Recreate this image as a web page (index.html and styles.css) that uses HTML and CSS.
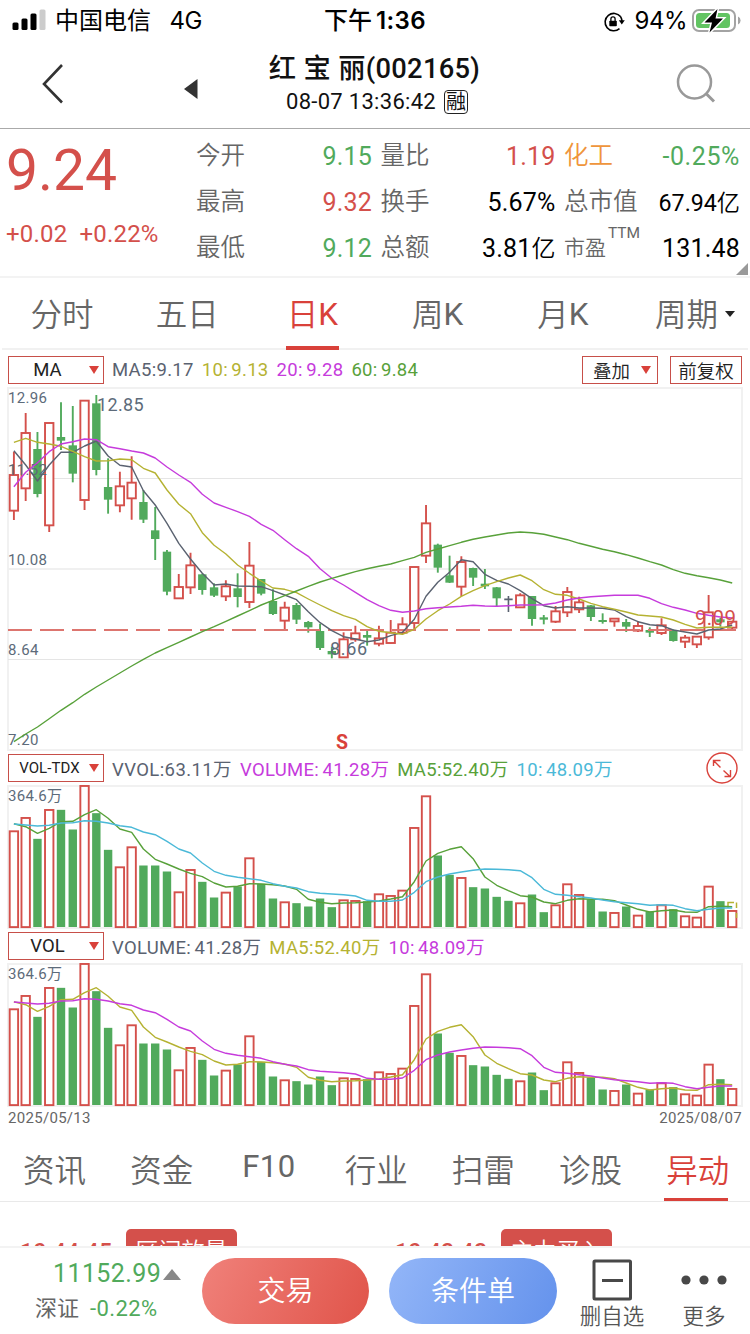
FILE: index.html
```html
<!DOCTYPE html>
<html lang="zh-CN">
<head>
<meta charset="utf-8">
<title>红宝丽 002165</title>
<link rel="stylesheet" href="styles.css">
</head>
<body>
<div class="screen">
  <div class="status">
    <svg class="signal" width="34" height="22" viewBox="0 0 34 22">
      <rect x="0.5" y="13.500" width="6" height="7.500" rx="1.500"/><rect x="9.500" y="9.500" width="6" height="11.500" rx="1.500"/>
      <rect x="18.500" y="4.500" width="6" height="16.500" rx="1.500"/><rect x="27.500" y="0.500" width="6" height="20.500" rx="1.500" fill="#ccc"/>
    </svg>
    <span class="carrier">中国电信</span><span class="net">4G</span>
    <span class="clock">下午<b>1:36</b></span>
    <svg class="lock" width="22" height="22" viewBox="0 0 22 22">
      <path d="M17.700 5.800A8.700 8.700 0 1 0 16.500 17.700M17.700 5.800Q19 8 19 10.500" fill="none" stroke="#000" stroke-width="1.600"/>
      <path d="M15.800 9.200h6l-3 4.300z"/><rect x="6.300" y="9.700" width="7.500" height="5.500" rx=".8"/>
      <path d="M7.900 10V8a2.100 2.100 0 0 1 4.200 0v2" fill="none" stroke="#000" stroke-width="1.300"/>
    </svg>
    <span class="percent">94%</span>
    <svg class="battery" width="49" height="26" viewBox="0 0 49 26">
      <rect x="1" y="2" width="42" height="21" rx="6" fill="none" stroke="#a3a3a3" stroke-width="2"/>
      <path d="M46 8.500q2.600 1 2.600 4t-2.600 4z" fill="#a3a3a3"/>
      <rect x="4" y="5" width="34" height="15" rx="3.500" fill="#62c462"/>
      <path d="M25.500 1 12.500 14.600H20L17.500 24.500 31 10.500H23.500z" stroke="#fff" stroke-width="3"/><path d="M25.500 1 12.500 14.600H20L17.500 24.500 31 10.500H23.500z"/>
    </svg>
  </div>

  <header class="header">
    <svg class="back" width="24" height="42" viewBox="0 0 24 42"><path d="M21 2 3 21 21 39.500" fill="none" stroke="#333" stroke-width="2.600"/></svg>
    <svg class="prev" width="14" height="20" viewBox="0 0 14 20"><path d="M0 10 13.500 0V20z" fill="#333"/></svg>
    <div class="title">
      <h1>红 宝 丽(002165)</h1>
      <p>08-07 13:36:42<span class="margin-tag">融</span></p>
    </div>
    <svg class="search" width="40" height="40" viewBox="0 0 40 40" fill="none" stroke="#999" stroke-width="2.500"><circle cx="18.500" cy="18" r="16.500"/><path d="M30 29.500 38 37.500" stroke-width="3"/></svg>
  </header>

  <section class="quote">
    <div class="price">
      <div class="last red">9.24</div>
      <div class="change red"><span>+0.02</span><span>+0.22%</span></div>
    </div>
    <dl class="stats">
      <div><dt>今开</dt><dd class="green">9.15</dd></div>
      <div><dt>量比</dt><dd class="red">1.19</dd></div>
      <div><dt class="orange">化工</dt><dd class="green wide">-0.25%</dd></div>
      <div><dt>最高</dt><dd class="red">9.32</dd></div>
      <div><dt>换手</dt><dd>5.67%</dd></div>
      <div><dt>总市值</dt><dd class="tight">67.94<i>亿</i></dd></div>
      <div><dt>最低</dt><dd class="green">9.12</dd></div>
      <div><dt>总额</dt><dd>3.81<i>亿</i></dd></div>
      <div><dt class="pe">市盈<sup>TTM</sup></dt><dd>131.48</dd></div>
    </dl>
    <span class="corner"></span>
  </section>

  <nav class="periods">
    <a>分时</a><a>五日</a><a class="on">日<b>K</b></a><a>周<b>K</b></a><a>月<b>K</b></a><a class="more">周期<i class="caret"></i></a>
  </nav>

  <section class="panel-main">
    <div class="legend">
      <button class="pick">MA<i class="tri"></i></button>
      <span class="slate">MA5:9.17</span><span class="olive">10: 9.13</span><span class="purple">20: 9.28</span><span class="leaf">60: 9.84</span>
      <button class="overlay">叠加<i class="tri"></i></button><button class="adjust">前复权</button>
    </div>
    <svg id="kline" class="chart" width="750" height="367" viewBox="0 385 750 367"></svg>
  </section>

  <section class="panel-vol">
    <div class="legend">
      <button class="pick small">VOL-TDX<i class="tri"></i></button>
      <span class="slate wide">VVOL:63.11万</span><span class="purple">VOLUME: 41.28万</span><span class="leaf">MA5:52.40万</span><span class="sky">10: 48.09万</span>
      <svg class="expand" width="32" height="32" viewBox="0 0 32 32" fill="none" stroke="#d9413a" stroke-width="1.400"><circle cx="16" cy="16" r="15"/><path d="M7.500 14V8.500H14.500M8 9 14.500 15.500M17.500 18.500 24.500 25M18.500 24.500H24.500V18"/></svg>
    </div>
    <svg id="vol1" class="chart" width="750" height="146" viewBox="0 784 750 146"></svg>
  </section>

  <section class="panel-vol">
    <div class="legend">
      <button class="pick">VOL<i class="tri"></i></button>
      <span class="slate">VOLUME: 41.28万</span><span class="olive">MA5:52.40万</span><span class="purple">10: 48.09万</span>
    </div>
    <svg id="vol2" class="chart" width="750" height="146" viewBox="0 784 750 146"></svg>
  </section>
  <div class="dates"><span>2025/05/13</span><span>2025/08/07</span></div>

  <nav class="topics">
    <a>资讯</a><a>资金</a><a class="latin">F10</a><a>行业</a><a>扫雷</a><a>诊股</a><a class="on">异动</a>
  </nav>

  <section class="moves">
    <div><time>10:44:45</time><span class="tag">区间放量</span><em>6.82%</em></div>
    <div><time>10:42:42</time><span class="tag">主力买入</span></div>
  </section>

  <footer class="bar">
    <div class="index"><div class="level green">11152.99<i></i></div><div class="delta"><span>深证</span><span class="green">-0.22%</span></div></div>
    <button class="trade">交易</button>
    <button class="cond">条件单</button>
    <div class="action del"><svg width="40" height="42" viewBox="0 0 40 42" fill="none" stroke="#484848" stroke-width="3"><rect x="2" y="2" width="36.500" height="38" rx="1"/><path d="M10 21.500H31"/></svg><span>删自选</span></div>
    <div class="action etc"><svg width="46" height="42" viewBox="0 0 46 42" fill="#484848"><circle cx="5" cy="21" r="4.600"/><circle cx="23" cy="21" r="4.600"/><circle cx="41" cy="21" r="4.600"/></svg><span>更多</span></div>
  </footer>
</div>
<script src="charts.js"></script>
</body>
</html>
```

FILE: charts.js
```js
const RED = '#d4504b', GREEN = '#51aa5c', SLATE = '#5a6270', OLIVE = '#b5b232', PURPLE = '#c63bdc', LEAF = '#58a13a', SKY = '#4bb9d8';
const x = i => 13.9 + i * 11.775;

// Each candle: [kind, high, body top, body bottom, low], in thirds of a pixel below y = 385
const candles = `r 200 270 377 405|r 84 144 310 348|g 141 192 327 337|r 114 114 421 441|g 52 156 167 195|g 63 181 266 292|r 47 47 345 375|g 30 55 255 271|g 220 306 344 386|r 260 304 361 382|r 214 293 340 404|g 315 351 404 414|g 366 436 462 525|g 495 500 620 631|r 567 606 640 640|r 503 541 607 627|g 566 568 615 629|g 595 607 632 636|r 586 604 634 648|g 565 610 636 667|r 471 542 651 669|g 582 582 626 631|g 613 648 687 690|r 650 668 707 732|g 654 660 704 717|g 708 711 727 743|g 716 738 789 795|g 785 798 808 820|r 742 763 817 817|r 722 745 763 770|g 732 750 758 782|r 722 760 776 784|r 705 743 774 776|r 697 718 743 748|r 546 546 714 736|r 360 415 512 534|g 476 479 548 563|g 512 571 593 594|r 514 531 605 634|g 548 549 578 603|g 552 596 604 612|g 606 607 640 664|d 633 643 643 681|r 625 631 667 669|g 633 633 702 722|g 690 697 704 718|r 663 679 710 714|r 606 621 682 696|r 635 652 673 684|g 660 661 696 708|g 685 705 711 716|r 700 701 709 725|g 702 711 725 741|r 708 723 737 741|g 727 735 743 756|r 700 721 744 750|g 733 736 768 770|r 750 758 770 789|r 753 755 778 789|r 630 682 757 764|g 699 703 712 725|r 708 710 728 732`
  .split('|').map(s => { const p = s.split(' '); return [p[0], ...p.slice(1).map(v => 385 + v / 3)]; });

const ma5 = [197,240,288,240,202,202,183,168,213,241,246,317,360,415,475,522,565,600,597,603,604,605,617,630,644,680,713,737,755,762,770,765,752,742,703,634,592,562,524,530,568,586,597,617,641,662,669,665,669,669,670,675,695,710,719,722,735,741,747,735,732,720];
const ma10 = [172,160,172,177,184,199,215,228,227,222,224,250,264,315,358,386,443,481,507,540,565,588,609,613,623,642,660,677,692,703,725,739,743,748,733,702,677,657,634,617,602,590,579,570,587,614,628,631,642,655,665,673,681,690,693,696,705,718,729,727,727,727];
const ma20 = [305,262,233,200,177,170,162,164,185,191,198,204,219,246,270,292,328,354,367,380,394,418,436,464,491,514,551,580,600,622,644,662,676,682,678,671,668,666,664,661,663,664,662,660,660,659,654,645,639,635,633,631,631,631,640,656,667,675,685,691,696,699];
const ma60 = [1070,1047,1026,1001,976,953,928,906,885,864,843,823,804,788,772,756,740,725,709,693,677,660,646,632,618,604,591,580,570,560,551,544,537,527,517,502,492,482,472,463,456,450,444,441,443,448,456,464,475,484,493,500,509,519,530,540,554,565,572,578,585,594];

// Volume tops and averages, in thirds of a pixel below y = 750
const vol = [243,203,268,179,181,240,107,191,301,351,291,348,348,366,426,359,397,444,427,411,324,403,447,456,461,471,447,473,450,452,455,432,437,421,233,138,318,376,383,413,417,442,454,459,435,488,465,402,434,450,486,488,471,496,486,465,479,498,502,409,455,482];
const vma5 = [221,230,250,235,215,214,194,179,205,237,247,297,328,342,357,370,380,399,411,409,401,402,404,408,418,448,457,461,459,458,456,453,447,440,395,333,310,298,290,326,381,406,422,437,441,456,461,451,446,448,448,452,465,478,486,482,480,486,487,470,469,470];
const vma10 = [222,225,228,226,219,218,212,214,219,227,232,246,254,274,297,309,339,364,376,382,386,391,401,409,414,425,430,432,434,438,451,454,454,450,427,395,381,372,366,361,357,358,359,362,383,418,433,436,440,444,450,455,458,461,466,464,466,476,482,478,474,474];

const line = (vals, base, color) =>
  `<polyline points="${vals.map((v, i) => x(i).toFixed(1) + ',' + (base + v / 3).toFixed(1)).join(' ')}" fill="none" stroke="${color}" stroke-width="1.4" stroke-linejoin="round"/>`;
const text = (s, tx, ty, size, width, color = '#5d6b7a', extra = '') =>
  `<text x="${tx}" y="${ty}" font-size="${size}" textLength="${width}" fill="${color}" ${extra}>${s}</text>`;
const rule = (y, w, c) => `<path d="M8 ${y}H742" stroke="${c}" stroke-width="${w}"/>`;

function kline() {
  let s = '<rect x="8" y="388" width="734" height="362" fill="none" stroke="#f1f1f1" stroke-width="2"/>';
  s += rule(478.5, 1, '#e5e5e5') + rule(569, 2, '#f0f0f0') + rule(659.5, 1, '#e5e5e5');
  candles.forEach(([k, h, t, b, l], i) => {
    const c = x(i);
    if (k === 'g') s += `<path d="M${c} ${h}V${l}" stroke="${GREEN}" stroke-width="1.9"/><rect x="${c - 4.2}" y="${t}" width="8.4" height="${b - t}" fill="${GREEN}"/>`;
    else if (k === 'r') s += `<path d="M${c} ${h}V${t}M${c} ${b}V${l}" stroke="${RED}" stroke-width="1.9"/><rect x="${c - 4.2}" y="${t}" width="8.4" height="${b - t}" fill="#fff" stroke="${RED}" stroke-width="1.9"/>`;
    else s += `<path d="M${c} ${h}V${l}M${c - 4.2} ${t}h8.4" stroke="${SLATE}" stroke-width="1.6"/>`;
  });
  s += text('12.96', 8, 403, 15, 39) + text('11.52', 8, 475, 15, 39) + text('10.08', 8, 565, 15, 39) + text('8.64', 8, 655, 15, 30.5) + text('7.20', 8, 745, 15, 30.5);
  s += text('12.85', 97, 411, 18, 46.5) + text('8.66', 330, 654.5, 18, 37);
  s += '<path d="M8 630H736" stroke="#dd756f" stroke-width="1.9" stroke-dasharray="24 8"/>';
  s += line(ma5, 385, SLATE) + line(ma10, 385, OLIVE) + line(ma20, 385, PURPLE) + line(ma60, 385, LEAF);
  s += text('9.09', 695, 625, 20.5, 41, RED);
  s += text('S', 336, 748.5, 19.5, 12.5, '#d9413a', 'font-weight="bold"');
  return s;
}

function volume(c5, c10, projected) {
  let s = '<rect x="8" y="786" width="734" height="142" fill="none" stroke="#f1f1f1" stroke-width="2"/>';
  vol.forEach((v, i) => {
    const c = x(i), top = 750 + v / 3;
    s += candles[i][0] === 'r'
      ? `<rect x="${c - 4.2}" y="${top + .3}" width="8.4" height="${926.8 - top}" fill="#fff" stroke="${RED}" stroke-width="1.9"/>`
      : `<rect x="${c - 4.2}" y="${top - .5}" width="8.4" height="${927.5 - top}" fill="${GREEN}"/>`;
  });
  if (projected) s += `<path d="M728 908V902.500H734M736.500 902.500V908M736.500 913V918" fill="none" stroke="${OLIVE}" stroke-width="1.500"/>`;
  return s + line(vma5, 750, c5) + line(vma10, 750, c10) + text('364.6万', 8, 801, 15, 54);
}

document.getElementById('kline').innerHTML = kline();
document.getElementById('vol1').innerHTML = volume(LEAF, SKY, true);
document.getElementById('vol2').innerHTML = volume(OLIVE, PURPLE, false);
```

FILE: styles.css
```css
* { box-sizing: border-box; margin: 0; padding: 0; }
body { width: 750px; height: 1334px; overflow: hidden; background: #fff; color: #000; font-family: Roboto, "Noto Sans CJK SC", sans-serif; font-weight: 400; }
button { font: inherit; background: none; border: 0; }
i, em { font-style: normal; }
.screen { display: flex; flex-direction: column; height: 1334px; }
.red { color: #d4504b; }
.green { color: #51aa5c; }
.orange { color: #ef953b; }
.slate { color: #5a6270; }
.olive { color: #b5b232; }
.purple { color: #c63bdc; }
.leaf { color: #58a13a; }
.sky { color: #4bb9d8; }

.status { height: 42px; display: flex; align-items: center; padding-left: 12px; font-family: Inter, "Noto Sans CJK SC", sans-serif; font-size: 24px; line-height: 40px; white-space: nowrap; }
.status > * { flex: none; }
.signal { margin-top: -3px; }
.carrier { width: 115px; padding-left: 9px; }
.net { width: 163px; padding-left: 8.500px; letter-spacing: -.5px; }
.clock { width: 278px; font-weight: 500; }
.clock b { font-weight: 600; margin-left: 4px; letter-spacing: .4px; }
.lock { margin: 1px 0 0 1px; }
.percent { width: 57px; margin-left: 9.500px; letter-spacing: -.4px; }

.header { height: 87px; display: flex; border-bottom: 1px solid #aaa; }
.back { margin: 21px 0 0 41px; }
.prev { margin: 37px 0 0 118.500px; }
.title { width: 360px; padding-top: 9px; text-align: center; color: #111; margin-left: -3px; }
.title h1 { font-size: 27.300px; line-height: 37px; font-weight: 500; letter-spacing: .3px; white-space: pre; }
.title p { font-size: 22px; line-height: 28px; letter-spacing: .3px; display: flex; justify-content: center; padding-left: 5px; }
.margin-tag { font-size: 20px; line-height: 22px; width: 24px; height: 24px; border: 1.500px solid #222; border-radius: 4px; margin: 2px 0 0 8px; letter-spacing: 0; }
.search { margin: 22px 0 0 121.500px; }

.quote { height: 149px; display: flex; border-bottom: 2px solid #f3f3f3; position: relative; }
.price { width: 196px; padding: 8px 0 0 6px; white-space: nowrap; }
.last { font-size: 57px; line-height: 68px; }
.change { display: flex; gap: 12px; font-size: 24px; line-height: 32px; margin-top: 13px; letter-spacing: .2px; }
.stats { display: grid; grid-template-columns: 176px 175px 176px; column-gap: 8.500px; grid-auto-rows: 46px; padding-top: 4.500px; }
.stats div { display: flex; justify-content: space-between; align-items: center; font-size: 25px; white-space: nowrap; }
.stats dt { color: #666; font-size: 24.500px; line-height: 46px; font-weight: 350; margin-top: -1px; }
.stats dt.orange { color: #ef953b; }
.stats dd { letter-spacing: .2px; line-height: 46px; }
.stats dd.wide { letter-spacing: .6px; }
.stats dd i { font-size: 24px; letter-spacing: 0; font-weight: 350; }
.stats dd.tight { font-size: 23.200px; letter-spacing: 0; }
.stats dd.tight i { font-size: 23.200px; }
.stats .pe { font-size: 21px; display: flex; }
.stats .pe sup { font-size: 15.500px; line-height: 18px; margin: -1px 0 0 2px; font-weight: 400; }
.corner { position: absolute; right: 2px; bottom: 1px; border-left: 12px solid transparent; border-bottom: 12px solid #999; }

.periods { height: 72px; display: flex; font-size: 31.500px; line-height: 75px; color: #666; border-bottom: 2px solid #f1f1f1; margin: 0 2px; white-space: nowrap; font-weight: 350; }
.periods a { width: 125.200px; flex: none; display: flex; justify-content: center; }
.periods a:first-child { margin-left: -2.500px; }
.periods b { font-weight: 400; margin-top: -1px; }
.periods .on { color: #d9413a; background: linear-gradient(#d9413a, #d9413a) center bottom / 53px 4px no-repeat; height: 72px; }
.periods .more { width: 122px; align-items: center; padding-left: 17px; height: 75px; }
.caret { border: 5px solid transparent; border-top: 6px solid #222; border-bottom: 0; margin-left: 7px; margin-top: -3px; }

.legend { display: flex; align-items: center; height: 28px; margin: 0 8px; font-size: 18.500px; white-space: nowrap; letter-spacing: .3px; word-spacing: -1.500px; }
.legend > span { margin-right: 8px; }
.panel-vol .legend > span { margin-top: -1px; }
.legend > .wide { letter-spacing: .4px; }
.legend button { border: 1.500px solid #c74f49; height: 28px; color: #222; display: flex; align-items: center; justify-content: center; letter-spacing: 0; font-size: 18.500px; }
.tri { border: 5.500px solid transparent; border-top: 8px solid #d9413a; border-bottom: 0; }
.pick { width: 96px; margin-right: 8px; position: relative; padding-right: 17px; }
.pick .tri { position: absolute; right: 4px; top: 9px; }
.legend .pick.small { font-size: 15px; padding-right: 13px; letter-spacing: .1px; }
.legend .overlay { width: 76px; gap: 11px; margin-left: auto; margin-right: 12px; padding-left: 4px; font-weight: 350; }
.legend .adjust { width: 72px; font-weight: 350; }
.expand { margin-left: auto; margin-right: 4px; flex: none; }
.chart { display: block; }
.panel-main { height: 404px; padding-top: 6px; }
.panel-main .chart { margin-top: 1px; }
.panel-vol { height: 178px; }
.panel-vol .chart { margin-top: 2px; }
.dates { display: flex; justify-content: space-between; margin: 0 8px; height: 22px; padding-right: 0; font-size: 15px; line-height: 16px; letter-spacing: .3px; color: #666; }

.topics { height: 70px; display: flex; padding-left: 1px; font-size: 31.500px; line-height: 80px; color: #666; border-bottom: 1px solid #e9e9e9; white-space: nowrap; font-weight: 350; }
.topics a { width: 107.200px; flex: none; text-align: center; }
.topics .latin { line-height: 70px; font-size: 31px; letter-spacing: .5px; font-weight: 400; }
.topics .on { color: #d9413a; background: linear-gradient(#d9413a, #d9413a) 20px bottom / 64px 3px no-repeat; height: 69px; }
.moves { height: 44px; overflow: hidden; display: flex; padding-left: 20px; }
.moves div { width: 375px; flex: none; display: flex; padding-top: 27px; }
.moves time { width: 106px; padding-top: 10px; font-size: 23px; line-height: 28px; font-weight: 500; color: #d4504b; letter-spacing: .2px; }
.moves .tag { width: 111px; height: 40px; border-radius: 5px; background: #d4504b; color: #fff; font-size: 23px; line-height: 46px; text-align: center; font-weight: 350; }
.moves em { margin-left: 38px; padding-top: 13px; font-size: 20px; line-height: 28px; color: #777; }

.bar { height: 88px; flex: none; display: flex; border-top: 2px solid #f3f3f3; white-space: nowrap; }
.index { width: 202px; }
.level { font-size: 25px; line-height: 30px; margin: 11px 0 0 53px; display: flex; align-items: center; letter-spacing: .4px; }
.level i { border: 9px solid transparent; border-bottom: 11px solid #888; border-top: 0; margin-left: 1.500px; }
.delta { display: flex; gap: 11px; margin: 3px 0 0 35px; font-size: 22px; line-height: 34px; color: #666; }
.delta .green { letter-spacing: .4px; }
.trade, .cond { width: 167px; height: 66px; border-radius: 33px; margin-top: 10px; color: #fff; font-size: 28px; line-height: 68px; font-weight: 350; }
.trade { background: linear-gradient(115deg, #f0817a, #e0544a); }
.cond { background: linear-gradient(115deg, #93b6f8, #6492ec); margin-left: 20px; width: 168px; }
.action { display: flex; flex-direction: column; align-items: center; font-size: 21.500px; line-height: 30px; color: #555; padding-top: 11px; font-weight: 350; }
.del { width: 70px; margin-left: 20px; }
.etc { width: 70px; margin-left: 22px; }
.action span { margin-top: 1px; }
```
